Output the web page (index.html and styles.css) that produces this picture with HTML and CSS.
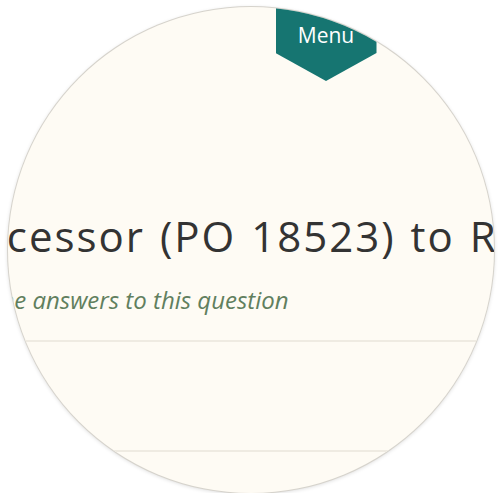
FILE: index.html
```html
<!DOCTYPE html>
<html>
<head>
<meta charset="utf-8">
<link rel="stylesheet" href="styles.css">
</head>
<body>
<div class="lens">
  <div class="page">
    <header class="topbar">
      <a class="menu">Menu</a>
    </header>
    <section class="intro">
      <h1 class="title">Assign Processor (PO 18523) to Requisition</h1>
      <p class="hint">Change the answers to this question</p>
    </section>
    <div class="row"></div>
    <div class="row"></div>
  </div>
</div>
</body>
</html>
```
FILE: styles.css
```css
html, body {
  margin: 0;
  padding: 0;
  background: #ffffff;
}
.lens {
  width: 486px;
  height: 486px;
  margin: 7px auto 0;
  border-radius: 50%;
  overflow: hidden;
  background: #fefbf4;
  box-shadow: 0 0 0 1px #d6d3cc, 0 1px 4px rgba(0,0,0,0.18);
  font-family: "Open Sans", Lato, sans-serif;
}
.page {
  margin-top: -7px;
  margin-left: -320px;
  width: 1200px;
}
.topbar {
  display: flex;
  padding-left: 588px;
}
.menu {
  display: flex;
  justify-content: center;
  width: 101px;
  height: 81px;
  padding-top: 21px;
  box-sizing: border-box;
  background: #167571;
  color: #ffffff;
  font-size: 21px;
  line-height: 28px;
  clip-path: polygon(0 0, 100% 0, 100% 53px, 50% 81px, 0 53px);
}
.intro {
  padding-top: 130px;
}
.title {
  margin: 0;
  padding-left: 93px;
  font-weight: 400;
  font-size: 42px;
  letter-spacing: 2px;
  word-spacing: 2px;
  line-height: 50px;
  color: #333333;
  white-space: nowrap;
}
.hint {
  margin: 24px 0 0;
  padding-left: 219px;
  font-style: italic;
  font-size: 24px;
  line-height: 30px;
  color: #617f5e;
  white-space: nowrap;
}
.row {
  border-top: 2px solid #efebe2;
  height: 108px;
  margin-top: 25px;
}
.row + .row {
  margin-top: 0;
}
```
